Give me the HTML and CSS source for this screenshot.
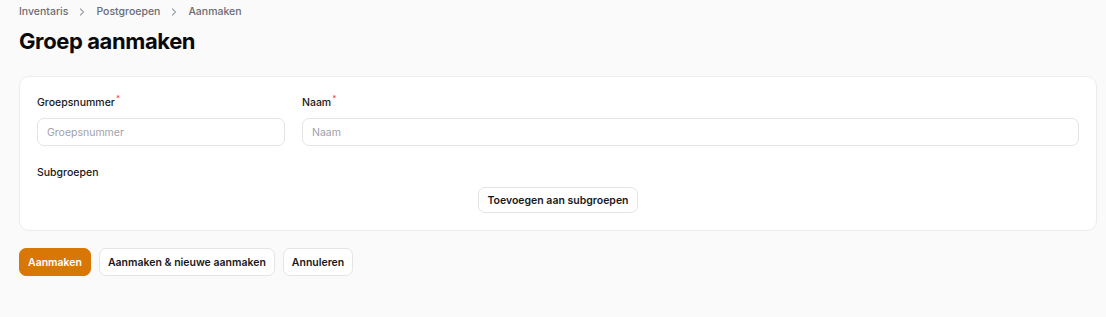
FILE: index.html
```html
<!DOCTYPE html>
<html lang="nl">
<head>
<meta charset="utf-8">
<title>Groep aanmaken</title>
<link rel="stylesheet" href="styles.css">
</head>
<body>
<main class="page">
  <nav class="breadcrumbs">
    <a class="crumb">Inventaris</a>
    <svg class="sep" viewBox="0 0 12 12" width="12" height="12" aria-hidden="true"><path d="M4.5 3 7.5 6 4.5 9" fill="none" stroke="currentColor" stroke-width="1.2" stroke-linecap="round" stroke-linejoin="round"/></svg>
    <a class="crumb">Postgroepen</a>
    <svg class="sep" viewBox="0 0 12 12" width="12" height="12" aria-hidden="true"><path d="M4.5 3 7.5 6 4.5 9" fill="none" stroke="currentColor" stroke-width="1.2" stroke-linecap="round" stroke-linejoin="round"/></svg>
    <span class="crumb">Aanmaken</span>
  </nav>
  <h1 class="title">Groep aanmaken</h1>

  <form class="form">
    <section class="card">
      <div class="grid">
        <div class="field">
          <label class="label">Groepsnummer<sup class="req">*</sup></label>
          <input class="input" type="text" placeholder="Groepsnummer">
        </div>
        <div class="field">
          <label class="label">Naam<sup class="req">*</sup></label>
          <input class="input" type="text" placeholder="Naam">
        </div>
      </div>
      <div class="repeater">
        <div class="label">Subgroepen</div>
        <div class="repeater-actions">
          <button type="button" class="btn btn-sm">Toevoegen aan subgroepen</button>
        </div>
      </div>
    </section>

    <div class="actions">
      <button type="button" class="btn btn-primary">Aanmaken</button>
      <button type="button" class="btn">Aanmaken &amp; nieuwe aanmaken</button>
      <button type="button" class="btn">Annuleren</button>
    </div>
  </form>
</main>
</body>
</html>
```

FILE: styles.css
```css
* { box-sizing: border-box; }
html, body {
  margin: 0;
  background: #fafafa;
  font-family: Inter, "Noto Sans", sans-serif;
  color: #09090b;
}
.page {
  padding: 4px 9px 0 19px;
}
.breadcrumbs {
  display: flex;
  align-items: center;
  font-size: 10.5px;
  line-height: 16px;
  font-weight: 500;
}
.crumb { color: #6b6b74; }
.sep {
  color: #a1a1aa;
  margin: 0 8px;
  flex: none;
}
.title {
  margin: 7px 0 0;
  font-size: 22px;
  line-height: 28px;
  font-weight: 700;
  letter-spacing: -0.4px;
}
.form { margin-top: 21px; }
.card {
  background: #fff;
  border: 1px solid #ececee;
  border-radius: 10px;
  padding: 18px 17px 17px;
}
.grid {
  display: grid;
  grid-template-columns: 248px 1fr;
  gap: 17px;
}
.field {
  display: flex;
  flex-direction: column;
  gap: 7px;
}
.label {
  font-size: 10.5px;
  line-height: 16px;
  font-weight: 500;
  color: #18181b;
}
.req {
  color: #ef4444;
  font-size: 8px;
  line-height: 0;
  margin-left: 1px;
  vertical-align: 5px;
}
.input {
  height: 28px;
  border: 1px solid #e4e4e7;
  border-radius: 7px;
  padding: 0 9px;
  font-family: inherit;
  font-size: 10.5px;
  color: #18181b;
  background: #fff;
  outline: none;
}
.input::placeholder { color: #a1a1aa; }
.repeater {
  margin-top: 19px;
  display: flex;
  flex-direction: column;
  gap: 6px;
}
.repeater-actions {
  display: flex;
  justify-content: center;
}
.btn {
  height: 28px;
  padding: 0 8px;
  border: 1px solid #e4e4e7;
  border-radius: 7px;
  background: #fff;
  font-family: inherit;
  font-size: 10.5px;
  font-weight: 600;
  color: #18181b;
  cursor: pointer;
}
.btn-sm { height: 26px; }
.actions {
  display: flex;
  gap: 8px;
  margin-top: 17px;
}
.btn-primary {
  background: #d97706;
  border-color: #d97706;
  color: #fff;
}
```
